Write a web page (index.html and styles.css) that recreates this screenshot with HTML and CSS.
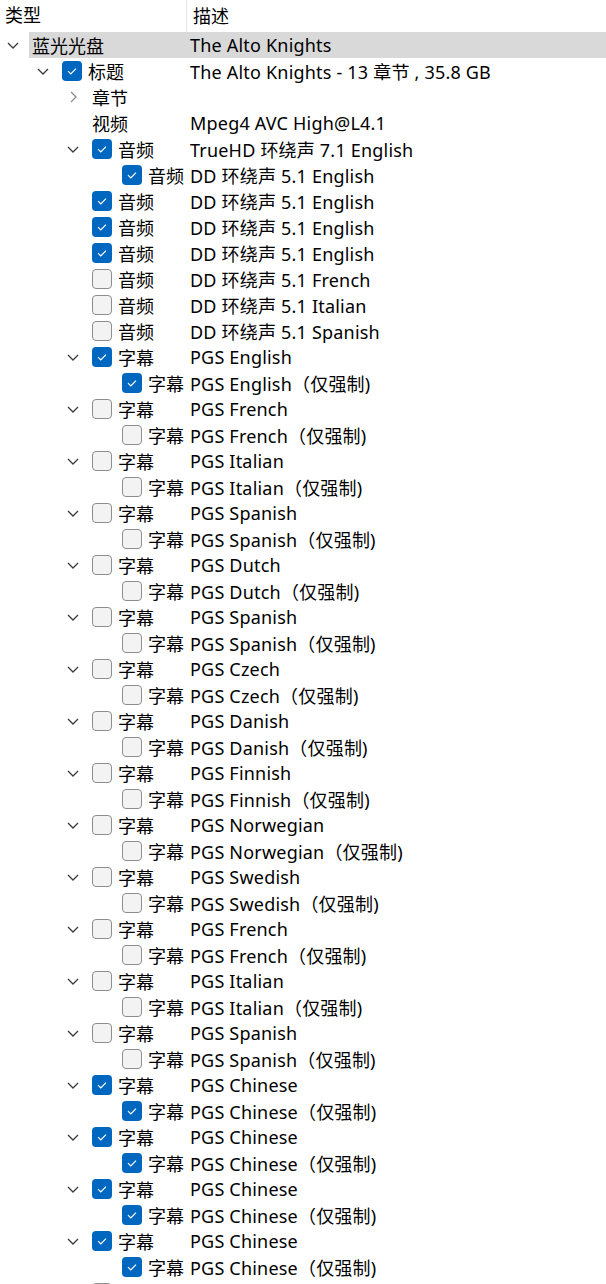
FILE: index.html
```html
<!DOCTYPE html>
<html lang="zh-CN">
<head>
    <meta charset="UTF-8">
    <meta name="viewport" content="width=device-width, initial-scale=1.0">
    <title>蓝光光盘</title>
    <link rel="stylesheet" href="styles.css">
</head>
<body>

    <div class="tree">
        <!-- Column headers -->
        <div class="header">
            <div class="col-type">类型</div>
            <div class="col-desc">描述</div>
        </div>

        <div id="rows"></div>
    </div>

    <script>
        // level, toggle (open/closed/none), checkbox (1/0/null), type, description
        const rows = [
            [0, 'open', null, '蓝光光盘', 'The Alto Knights', true],
            [1, 'open', 1, '标题', 'The Alto Knights - 13 章节 , 35.8 GB'],
            [2, 'closed', null, '章节', ''],
            [2, 'none', null, '视频', 'Mpeg4 AVC High@L4.1'],
            [2, 'open', 1, '音频', 'TrueHD 环绕声 7.1 English'],
            [3, 'none', 1, '音频', 'DD 环绕声 5.1 English'],
            [2, 'none', 1, '音频', 'DD 环绕声 5.1 English'],
            [2, 'none', 1, '音频', 'DD 环绕声 5.1 English'],
            [2, 'none', 1, '音频', 'DD 环绕声 5.1 English'],
            [2, 'none', 0, '音频', 'DD 环绕声 5.1 French'],
            [2, 'none', 0, '音频', 'DD 环绕声 5.1 Italian'],
            [2, 'none', 0, '音频', 'DD 环绕声 5.1 Spanish']
        ];

        const subs = [
            ['English', 1], ['French', 0], ['Italian', 0], ['Spanish', 0],
            ['Dutch', 0], ['Spanish', 0], ['Czech', 0], ['Danish', 0],
            ['Finnish', 0], ['Norwegian', 0], ['Swedish', 0], ['French', 0],
            ['Italian', 0], ['Spanish', 0], ['Chinese', 1], ['Chinese', 1],
            ['Chinese', 1], ['Chinese', 1]
        ];

        subs.forEach(([lang, on]) => {
            rows.push([2, 'open', on, '字幕', 'PGS ' + lang]);
            rows.push([3, 'none', on, '字幕', 'PGS ' + lang + '（仅强制)']);
        });
        // next row is only just showing at the bottom edge
        rows.push([2, 'none', 0, '', '']);

        const chevronDown = '<svg width="12" height="7" viewBox="0 0 12 7"><path d="M1 1 L6 6 L11 1" fill="none" stroke="#3a3a3a" stroke-width="1.3"/></svg>';
        const chevronRight = '<svg width="7" height="12" viewBox="0 0 7 12"><path d="M1 1 L6 6 L1 11" fill="none" stroke="#8c8c8c" stroke-width="1.3"/></svg>';
        const tick = '<svg width="20" height="20" viewBox="0 0 20 20"><path d="M6 10.2 L8.8 13 L14 7.6" fill="none" stroke="#fff" stroke-width="1.2"/></svg>';

        const list = document.getElementById('rows');
        rows.forEach(([level, toggle, check, type, desc, selected]) => {
            const row = document.createElement('div');
            row.className = 'row lv' + level + (selected ? ' selected' : '');

            let toggleHtml = '';
            if (toggle === 'open') toggleHtml = chevronDown;
            if (toggle === 'closed') toggleHtml = chevronRight;

            let checkHtml = '';
            if (check === 1) checkHtml = `<span class="check on">${tick}</span>`;
            if (check === 0) checkHtml = '<span class="check"></span>';

            row.innerHTML = `<div class="col-type"><span class="toggle">${toggleHtml}</span><span class="label">${checkHtml}<span>${type}</span></span></div><div class="col-desc">${desc}</div>`;
            list.appendChild(row);
        });
    </script>

</body>
</html>
```

FILE: styles.css
```css
body {
    margin: 0;
    padding: 0;
    font-family: "Noto Sans", "Noto Sans CJK SC", sans-serif;
    font-size: 18px;
    color: #000;
    background-color: #fff;
    overflow: hidden;
}

.tree {
    width: 606px;
}

.header {
    display: flex;
    height: 32px;
    align-items: center;
}

.header .col-type {
    width: 181px;
    height: 32px;
    line-height: 30px;
    padding-left: 5px;
    border-right: 1px solid #e5e5e5;
    flex: none;
}

.header .col-desc {
    padding-left: 6px;
    line-height: 30px;
}

.row {
    display: flex;
    align-items: center;
    height: 26px;
    white-space: nowrap;
}

.row.selected {
    background: linear-gradient(to right, transparent 29px, #d9d9d9 29px);
}

.row .col-type {
    width: 186px;
    flex: none;
    display: flex;
    align-items: center;
    box-sizing: border-box;
}

.lv1 .col-type { padding-left: 30px; }
.lv2 .col-type { padding-left: 60px; }
.lv3 .col-type { padding-left: 90px; }

.toggle {
    width: 26px;
    height: 26px;
    flex: none;
    display: flex;
    align-items: center;
    justify-content: center;
}

.label {
    display: flex;
    align-items: center;
    margin-left: 6px;
}

.check {
    width: 20px;
    height: 20px;
    box-sizing: border-box;
    border: 1px solid #8d8d8d;
    border-radius: 4px;
    background-color: #f3f3f3;
    margin-right: 6px;
    flex: none;
    display: flex;
}

.check.on {
    border: none;
    background-color: #0067c0;
}

.row .col-desc {
    padding-left: 4px;
    letter-spacing: 0.2px;
}
```
